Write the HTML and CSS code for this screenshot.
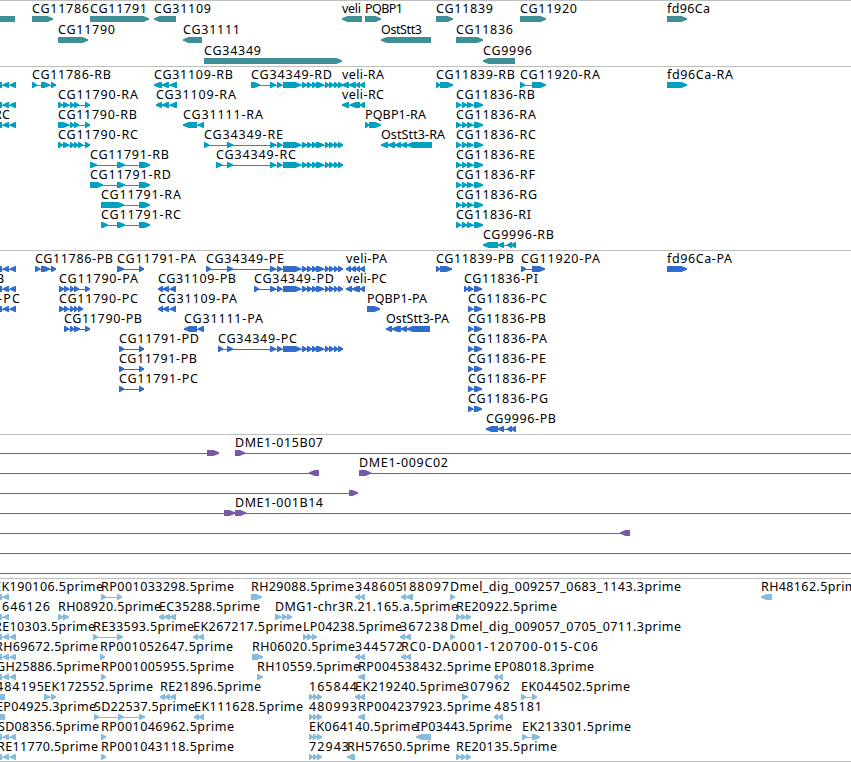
FILE: index.html
```html
<!DOCTYPE html>
<html lang="en">
  <head>
    <meta charset="UTF-8" />
    <meta name="viewport" content="width=device-width, initial-scale=1.0" />
    <title>Genome tracks</title>

    <link rel="stylesheet" href="styles.css">
  </head>
  <body>
    <div class="tracks">
      <svg class="track genes"></svg>
      <svg class="track transcripts"></svg>
      <svg class="track proteins"></svg>
      <svg class="track clones"></svg>
      <svg class="track ests"></svg>
    </div>

    <script src="tracks.js"></script>
  </body>
</html>
```
FILE: styles.css
```css
body {
  margin: 0;
  background: #fff;
  overflow: hidden;
}

.tracks {
  display: flex;
  flex-direction: column;
  border-bottom: 1px solid #bebebe;
}

.track {
  display: block;
  box-sizing: border-box;
  width: 100%;
  border-top: 1px solid #bebebe;
  overflow: hidden;
}

.track text {
  font-family: "Noto Sans", "DejaVu Sans", sans-serif;
  font-size: 12.5px;
  fill: #000;
}

.genes {
  height: 66px;
  color: #3f8f96;
}

.transcripts {
  height: 184px;
  color: #00a0c0;
}

.proteins {
  height: 184px;
  color: #326ccb;
}

.clones {
  height: 144px;
  color: #7759a7;
}

.ests {
  height: 183px;
  color: #87bbdd;
}

.exon {
  fill: currentColor;
}

.intron {
  fill: currentColor;
  shape-rendering: crispEdges;
}
```
FILE: tracks.js
```js
// one line per feature: row | label | label x | strand | exons
const tail = "270-276 277-282 283-301 302-307 307-312 312-317 316-324 325-329 329-334 334-338 338-343"
const left3 = "-6-2 3-9 10-16"
const left2 = "-6-2 3-9"
const cg11836 = "456-461 462-467 467-473 474-483"
const cg11836p = "468-473 474-482"
const three = "309-313 313-317 317-322"

const tracks = {
  genes: `
0|||=|-10-15
0|CG11786|32|>|32-53
0|CG11791|90|>|90-149
0|CG31109|154|<|154-176
0|veli|342|<|342-362
0|PQBP1|365|>|365-381
0|CG11839|436|>|436-453
0|CG11920|520|>|520-546
0|fd96Ca|667|>|667-687
1|CG11790|58|>|58-88
1|CG31111|183|<|183-202
1|OstStt3|381|<|381-431
1|CG11836|456|>|456-483
2|CG34349|204|>|204-342
2|CG9996|483|<|483-515`,
  transcripts: `
0|||<|${left3}
0|CG11786-RB|32|>|32-37 41-50 51-56
0|CG31109-RB|154|<|154-162 162-169 170-177
0|CG34349-RD|251|>|251-260 ${tail}
0|veli-RA|342|<|342-349 349-356 356-360 360-365
0|CG11839-RB|436|>|436-440 440-453
0|CG11920-RA|520|>|520-525 532-546
0|fd96Ca-RA|667|>|667-687
1|||<|${left3}
1|CG11790-RA|58|>|58-63 63-69 70-74 74-79 85-90
1|CG31109-RA|156|<|156-162 162-169 170-177
1|veli-RC|342|<|342-349 350-360 360-365
1|CG11836-RB|456|>|${cg11836}
2|RC|-6|<|${left3}
2|CG11790-RB|58|>|58-69 70-74 74-79 85-90
2|CG31111-RA|183|<|183-197 198-204
2|PQBP1-RA|365|>|365-369 369-381
2|CG11836-RA|456|>|${cg11836}
3|CG11790-RC|58|>|58-63 63-69 70-74 74-78 78-83 85-90
3|CG34349-RE|204|>|204-209 227-233 ${tail}
3|OstStt3-RA|381|<|381-388 388-395 395-401 401-407 407-432
3|CG11836-RC|456|>|${cg11836}
4|CG11791-RB|90|>|90-97 117-125 139-150
4|CG34349-RC|216|>|216-222 227-233 ${tail}
4|CG11836-RE|456|>|${cg11836}
5|CG11791-RD|90|>|90-103 117-125 139-150
5|CG11836-RF|456|>|${cg11836}
6|CG11791-RA|101|>|101-124 139-150
6|CG11836-RG|456|>|${cg11836}
7|CG11791-RC|101|>|101-108 117-125 139-150
7|CG11836-RI|456|>|${cg11836}
8|CG9996-RB|483|<|483-498 498-504 507-512 511-516`,
  proteins: `
0|||<|${left3}
0|CG11786-PB|35|>|35-40 41-50 51-56
0|CG11791-PA|117|>|117-124 139-144
0|CG34349-PE|206|>|206-211 227-233 ${tail}
0|veli-PA|346|<|346-351 351-356 356-360 360-365
0|CG11839-PB|436|>|436-440 440-452
0|CG11920-PA|521|>|521-526 532-545
0|fd96Ca-PA|667|>|667-687
1|B|-4|<|${left3}
1|CG11790-PA|59|>|59-64 64-69 70-74 74-79 85-90
1|CG31109-PB|158|<|158-163 163-169 170-176
1|CG34349-PD|254|>|254-259 ${tail}
1|veli-PC|346|<|346-352 352-360 360-365
1|CG11836-PI|464|>|464-468 468-473 474-482
2|-PC|-2|<|${left3}
2|CG11790-PC|59|>|59-64 64-69 70-74 74-78 78-83
2|CG31109-PA|158|<|158-163 163-169 170-176
2|PQBP1-PA|367|>|367-380
2|CG11836-PC|468|>|${cg11836p}
3|CG11790-PB|64|>|64-69 70-74 74-80 85-90
3|CG31111-PA|184|<|184-197 198-204
3|OstStt3-PA|386|<|386-392 392-401 401-407 407-430
3|CG11836-PB|468|>|${cg11836p}
4|CG11791-PD|119|>|119-124 139-144
4|CG34349-PC|218|>|218-223 227-233 ${tail}
4|CG11836-PA|468|>|${cg11836p}
5|CG11791-PB|119|>|119-124 139-144
5|CG11836-PE|468|>|${cg11836p}
6|CG11791-PC|119|>|119-124 139-144
6|CG11836-PF|468|>|${cg11836p}
7|CG11836-PG|468|>|${cg11836p}
8|CG9996-PB|486|<|486-498 498-504 507-512 511-516`,
  clones: `
0|||>|-20--10 207-219
0|DME1-015B07|235|>|235-245 870-880
1|||<|-20--10 309-319
1|DME1-009C02|359|>|359-371 870-880
2|||>|-20--10 349-358
3|||>|-20--10 224-235
3|DME1-001B14|235|>|235-246 870-880
4|||<|-20--10 620-630
5|||>|-20--10 870-880
6|||>|-20--10 870-880`,
  ests: `
0|EK190106.5prime|-6|<|${left2}
0|RP001033298.5prime|101|>|101-106 117-122
0|RH29088.5prime|251|>|251-262
0|348605|355|<|355-360 360-365
0|188097|401|<|401-406 406-413
0|Dmel_dig_009257_0683_1143.3prime|450|>|450-455
0|RH48162.5prime|761|<|761-772
1|646126|2|<|${left2}
1|RH08920.5prime|58|>|58-63 63-69
1|EC35288.5prime|159|<|159-164 164-170 170-176
1|DMG1-chr3R.21.165.a.5prime|275|>|275-281 282-287 287-292
1|RE20922.5prime|456|>|456-461 461-466 466-471
2|RE10303.5prime|-6|<|${left3}
2|RE33593.5prime|93|>|93-98 117-123
2|EK267217.5prime|193|<|193-198 198-204
2|LP04238.5prime|303|>|303-307 307-312 312-317
2|367238|400|<|400-405 405-411
2|Dmel_dig_009057_0705_0711.3prime|450|>|450-455
3|RH69672.5prime|-5|<|${left3}
3|RP001052647.5prime|100|>|100-105
3|RH06020.5prime|252|>|252-263
3|344572|355|<|355-360 360-365
3|RC0-DA0001-120700-015-C06|401|<|401-406 406-411
4|GH25886.5prime|-4|<|${left3}
4|RP001005955.5prime|101|>|101-106
4|RH10559.5prime|257|>|257-263
4|RP004538432.5prime|358|<|358-365
4|EP08018.3prime|494|<|494-498 498-503
5|484195|-4|=|-6-5
5|EK172552.5prime|44|>|44-50 51-56
5|RE21896.5prime|160|<|160-165 165-170 170-176
5|165844|309|>|${three}
5|EK219240.5prime|355|<|355-360 360-365
5|307962|462|>|462-468
5|EK044502.5prime|521|>|521-526 532-537
6|EP04925.3prime|-4|=|-6-5
6|SD22537.5prime|94|>|94-99 118-124 139-145
6|EK111628.5prime|194|<|194-199 199-204
6|480993|309|>|${three}
6|RP004237923.5prime|358|<|358-365
6|485181|494|<|494-498 498-503
7|SD08356.5prime|-2|<|${left3}
7|RP001046962.5prime|101|>|101-106
7|EK064140.5prime|309|>|${three}
7|IP03443.5prime|416|<|416-431
7|EK213301.5prime|522|>|522-527 532-540
8|RE11770.5prime|-3|<|${left3}
8|RP001043118.5prime|101|>|101-106
8|72943|309|>|${three}
8|RH57650.5prime|347|<|347-355
8|RE20135.5prime|456|>|456-461 461-466 466-471`
}

// whole pixel advances for the label font
const advances = {
  A: 8, B: 7, C: 8, D: 9, E: 7, G: 9, H: 9, I: 3, K: 8, L: 6, M: 10, O: 9,
  P: 7, Q: 9, R: 8, S: 6, F: 7, a: 7, c: 6, d: 8, e: 7, f: 4, g: 8, h: 8,
  i: 3, l: 3, m: 11, p: 8, r: 5, s: 6, t: 4, v: 6, "-": 7, _: 6, ".": 4
}

const labelWidth = (label) =>
  [...label].reduce((sum, c) => sum + (advances[c] || 8), 0)

const exonPoints = (a, b, top, strand) => {
  const tip = Math.min(5.5, b - a - 1)
  const bottom = top + 6
  const upper = top + 2.2
  const lower = top + 3.8
  if (strand === ">") {
    return `${a},${top} ${b - tip},${top} ${b},${upper} ${b},${lower} ${b - tip},${bottom} ${a},${bottom}`
  }
  if (strand === "<") {
    return `${b},${top} ${a + tip},${top} ${a},${upper} ${a},${lower} ${a + tip},${bottom} ${b},${bottom}`
  }
  return `${a},${top} ${b},${top} ${b},${bottom} ${a},${bottom}`
}

const drawFeature = (line, pitch) => {
  const [row, label, x, strand, list] = line.split("|")
  const y = row * pitch
  const top = y + 15
  const exons = list.split(" ").map((e) => {
    const [, a, b] = e.match(/^(-?\d+)-(-?\d+)$/)
    return [Number(a), Number(b)]
  })
  const start = exons[0][0]
  const end = exons[exons.length - 1][1]
  let out = `<rect class="intron" x="${start}" y="${top + 3}" width="${end - start}" height="1"/>`
  out += exons
    .map(([a, b]) => `<polygon class="exon" points="${exonPoints(a, b, top, strand)}"/>`)
    .join("")
  if (label) {
    out += `<text x="${x}" y="${y + 12}" textLength="${labelWidth(label)}">${label}</text>`
  }
  return out
}

Object.keys(tracks).forEach((name) => {
  const pitch = name === "genes" ? 21 : 20
  document.querySelector(`.${name}`).innerHTML = tracks[name]
    .trim()
    .split("\n")
    .map((line) => drawFeature(line, pitch))
    .join("")
})
```
